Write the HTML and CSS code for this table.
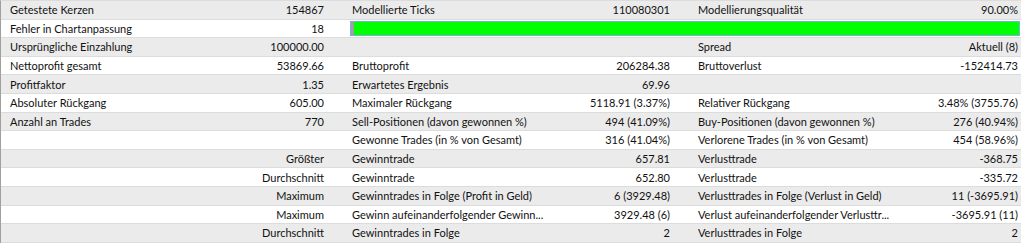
FILE: index.html
```html
<!DOCTYPE html>
<html lang="de">
<head>
<meta charset="utf-8">
<title>Testbericht</title>
<link rel="stylesheet" href="styles.css">
</head>
<body>
<div class="report">
  <div class="row alt">
    <div class="l1">Getestete Kerzen</div><div class="v1">154867</div>
    <div class="l2">Modellierte Ticks</div><div class="v2">110080301</div>
    <div class="l3">Modellierungsqualität</div><div class="v3">90.00%</div>
  </div>
  <div class="row">
    <div class="l1">Fehler in Chartanpassung</div><div class="v1">18</div>
    <div class="bar"><div class="bar-bad"></div><div class="bar-good"></div></div>
  </div>
  <div class="row alt">
    <div class="l1">Ursprüngliche Einzahlung</div><div class="v1">100000.00</div>
    <div class="l2"></div><div class="v2"></div>
    <div class="l3">Spread</div><div class="v3">Aktuell (8)</div>
  </div>
  <div class="row">
    <div class="l1">Nettoprofit gesamt</div><div class="v1">53869.66</div>
    <div class="l2">Bruttoprofit</div><div class="v2">206284.38</div>
    <div class="l3">Bruttoverlust</div><div class="v3">-152414.73</div>
  </div>
  <div class="row alt">
    <div class="l1">Profitfaktor</div><div class="v1">1.35</div>
    <div class="l2">Erwartetes Ergebnis</div><div class="v2">69.96</div>
    <div class="l3"></div><div class="v3"></div>
  </div>
  <div class="row">
    <div class="l1">Absoluter Rückgang</div><div class="v1">605.00</div>
    <div class="l2">Maximaler Rückgang</div><div class="v2">5118.91 (3.37%)</div>
    <div class="l3">Relativer Rückgang</div><div class="v3">3.48% (3755.76)</div>
  </div>
  <div class="row alt">
    <div class="l1">Anzahl an Trades</div><div class="v1">770</div>
    <div class="l2">Sell-Positionen (davon gewonnen %)</div><div class="v2">494 (41.09%)</div>
    <div class="l3">Buy-Positionen (davon gewonnen %)</div><div class="v3">276 (40.94%)</div>
  </div>
  <div class="row">
    <div class="l1"></div><div class="v1"></div>
    <div class="l2">Gewonne Trades (in % von Gesamt)</div><div class="v2">316 (41.04%)</div>
    <div class="l3">Verlorene Trades (in % von Gesamt)</div><div class="v3">454 (58.96%)</div>
  </div>
  <div class="row alt">
    <div class="l1"></div><div class="v1">Größter</div>
    <div class="l2">Gewinntrade</div><div class="v2">657.81</div>
    <div class="l3">Verlusttrade</div><div class="v3">-368.75</div>
  </div>
  <div class="row">
    <div class="l1"></div><div class="v1">Durchschnitt</div>
    <div class="l2">Gewinntrade</div><div class="v2">652.80</div>
    <div class="l3">Verlusttrade</div><div class="v3">-335.72</div>
  </div>
  <div class="row alt">
    <div class="l1"></div><div class="v1">Maximum</div>
    <div class="l2">Gewinntrades in Folge (Profit in Geld)</div><div class="v2">6 (3929.48)</div>
    <div class="l3">Verlusttrades in Folge (Verlust in Geld)</div><div class="v3">11 (-3695.91)</div>
  </div>
  <div class="row">
    <div class="l1"></div><div class="v1">Maximum</div>
    <div class="l2">Gewinn aufeinanderfolgender Gewinn...</div><div class="v2">3929.48 (6)</div>
    <div class="l3">Verlust aufeinanderfolgender Verlusttr...</div><div class="v3">-3695.91 (11)</div>
  </div>
  <div class="row alt">
    <div class="l1"></div><div class="v1">Durchschnitt</div>
    <div class="l2">Gewinntrades in Folge</div><div class="v2">2</div>
    <div class="l3">Verlusttrades in Folge</div><div class="v3">2</div>
  </div>
</div>
</body>
</html>
```
FILE: styles.css
```css
html, body {
  margin: 0;
  padding: 0;
  background: #ffffff;
}
.report {
  width: 1020px;
  border-top: 1px solid #dcdcdc;
  border-left: 1px solid #a0a0a0;
  font-family: Lato, "Noto Sans", sans-serif;
  font-size: 11px;
  color: #111111;
}
.row {
  display: grid;
  grid-template-columns: 199px 130px 230px 116px 174px 170px;
  height: 17.6px;
  border-bottom: 1px solid #dcdcdc;
  background: #ffffff;
  align-items: center;
  line-height: 17px;
}
.row.alt {
  background: #ebebeb;
}
.row > div {
  white-space: nowrap;
}
.l1 { padding-left: 9px; }
.v1 { text-align: right; padding-right: 6px; }
.l2 { padding-left: 22px; }
.v2 { text-align: right; padding-right: 6px; }
.l3 { padding-left: 22px; }
.v3 { text-align: right; padding-right: 2px; }
.bar {
  grid-column: 3 / 7;
  margin-left: 20px;
  margin-right: 0;
  height: 13px;
  border: 1px solid #7aaee0;
  display: flex;
  background: #00ff00;
}
.bar-bad {
  width: 3px;
  background: #a0a0a0;
}
.bar-good {
  flex: 1;
  background: #00ff00;
}
```
